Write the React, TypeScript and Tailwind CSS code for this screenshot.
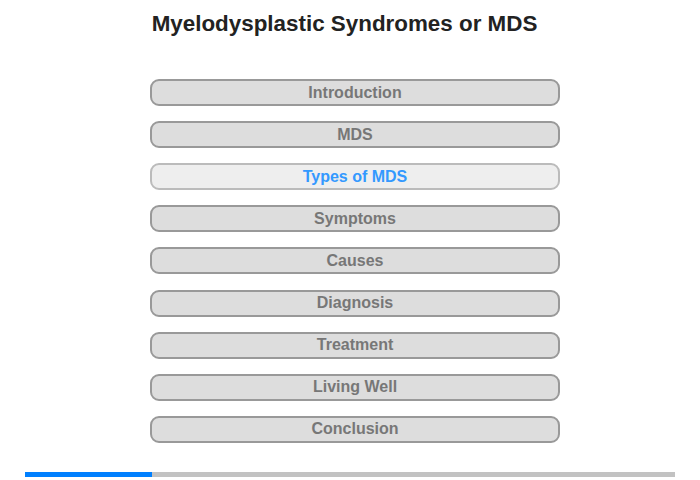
import React from "react";

const items = ["Introduction", "MDS", "Types of MDS", "Symptoms", "Causes", "Diagnosis", "Treatment", "Living Well", "Conclusion"];

export default function App() {
  return (
    <div className="w-[700px] h-[480px] bg-white relative" style={{ fontFamily: '"Liberation Sans", Arial, sans-serif' }}>
      <div className="pt-[11px] h-[79px] flex justify-center">
        <h1 className="text-[22.4px] font-bold text-[#222] leading-[26px] ml-[-11px]">Myelodysplastic Syndromes or MDS</h1>
      </div>
      <div className="flex flex-col items-start pl-[150px] gap-[15.11px]">
        {items.map((t) => {
          const active = t === "Types of MDS";
          return (
            <div
              key={t}
              className={
                active
                  ? "w-[410px] h-[27px] rounded-[9px] border-2 border-[#bbbbbb] bg-[#eeeeee] flex items-center justify-center text-[16px] font-bold text-[#3399ff]"
                  : "w-[410px] h-[27px] rounded-[9px] border-2 border-[#999999] bg-[#dddddd] flex items-center justify-center text-[16px] font-bold text-[#777777]"
              }
            >
              {t}
            </div>
          );
        })}
      </div>
      <div className="absolute left-[25px] top-[472px] w-[650px] h-[5px] bg-[#c2c2c2] flex">
        <div className="w-[127px] h-full bg-[#0080ff]" />
      </div>
    </div>
  );
}
